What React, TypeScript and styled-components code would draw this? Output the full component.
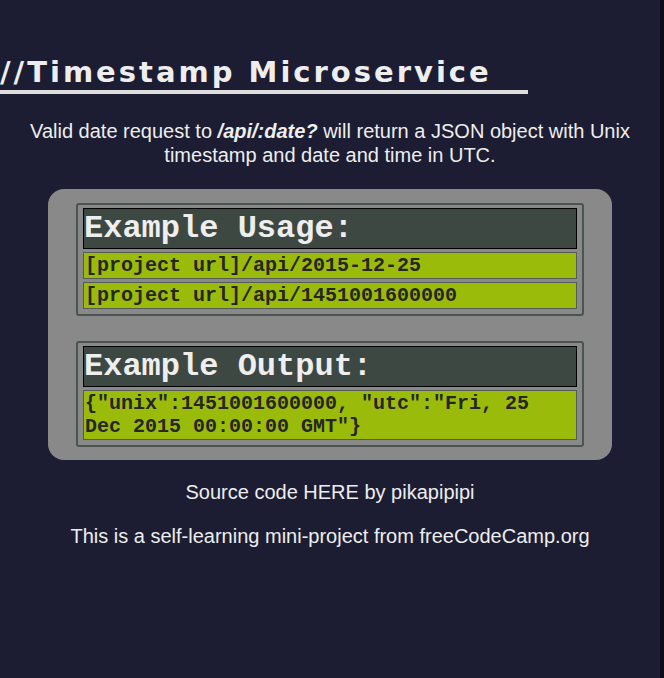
import React from "react";
import styled, { createGlobalStyle } from "styled-components";

const GlobalStyle = createGlobalStyle`
    html, body {
        margin: 0;
        padding: 0;
        background-color: #1c1d33;
    }
    body {
        font-family: "Liberation Sans", Arial, sans-serif;
        color: #eeeeee;
    }
`;

const Page = styled.div`
    min-height: 100vh;
    box-sizing: border-box;
    border-right: 4px solid #0c0c14;
    padding-top: 55px;
    padding-bottom: 40px;
`;

const Title = styled.h1`
    display: inline-block;
    margin: 0;
    padding-right: 36px;
    font-family: "DejaVu Sans", Verdana, sans-serif;
    font-weight: bold;
    font-size: 29px;
    letter-spacing: 3px;
    line-height: 35px;
    color: #eeeeee;
    border-bottom: 4px solid #dddddd;
`;

const Intro = styled.p`
    margin: 25px 20px 0;
    text-align: center;
    font-size: 20px;
    line-height: 24px;
    em {
        font-weight: bold;
    }
`;

const Card = styled.div`
    width: 564px;
    margin: 22px auto 0;
    box-sizing: border-box;
    background-color: #898989;
    border-radius: 16px;
    padding: 14px 28px 13px;
    display: flex;
    flex-direction: column;
    gap: 25px;
`;

const Section = styled.div`
    border: 2px solid #4b5450;
    border-radius: 3px;
    padding: 3px 5px 5px;
    display: flex;
    flex-direction: column;
    gap: 3px;
`;

const SectionTitle = styled.h3`
    margin: 0;
    background-color: #3e4843;
    border: 1px solid #000;
    font-family: "Liberation Mono", "Courier New", monospace;
    font-weight: bold;
    font-size: 32px;
    line-height: 39px;
    color: #eeeeee;
    padding-left: 0;
`;

const Code = styled.div`
    background-color: #9bbb0b;
    border: 1px solid #555c58;
    font-family: "Liberation Mono", "Courier New", monospace;
    font-weight: bold;
    font-size: 20px;
    line-height: 23px;
    color: #262626;
    padding: 1px 2px 1px 1px;
    min-height: 23px;
`;

const Footer = styled.p`
    margin: 21px 0 0;
    text-align: center;
    font-size: 20px;
    line-height: 23px;
`;

const usage = ["[project url]/api/2015-12-25", "[project url]/api/1451001600000"];

export default function App() {
    return (
        <>
            <GlobalStyle />
            <Page>
                <Title>//Timestamp Microservice</Title>
                <Intro>
                    Valid date request to <em>/api/:date?</em> will return a JSON object with Unix
                    timestamp and date and time in UTC.
                </Intro>
                <Card>
                    <Section>
                        <SectionTitle>Example Usage:</SectionTitle>
                        {usage.map((u) => (
                            <Code key={u}>{u}</Code>
                        ))}
                    </Section>
                    <Section>
                        <SectionTitle>Example Output:</SectionTitle>
                        <Code>{'{"unix":1451001600000, "utc":"Fri, 25 Dec 2015 00:00:00 GMT"}'}</Code>
                    </Section>
                </Card>
                <Footer>Source code HERE by pikapipipi</Footer>
                <Footer>This is a self-learning mini-project from freeCodeCamp.org</Footer>
            </Page>
        </>
    );
}
